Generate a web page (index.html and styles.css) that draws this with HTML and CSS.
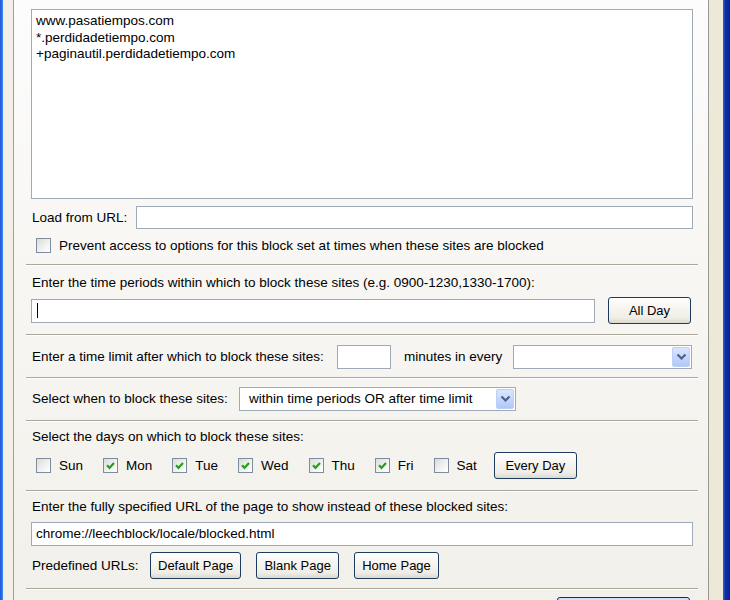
FILE: index.html
```html
<!DOCTYPE html>
<html lang="en">
<head>
<meta charset="utf-8">
<title>LeechBlock Options</title>
<link rel="stylesheet" href="styles.css">
</head>
<body>
<div class="window">
  <div class="frame-l"></div>
  <div class="gutter-l"></div>
  <div class="panel">
    <div class="sites">www.pasatiempos.com<br>*.perdidadetiempo.com<br>+paginautil.perdidadetiempo.com</div>

    <div class="row row-load">
      <span class="lbl lbl-load">Load from URL:</span>
      <div class="input input-load"></div>
    </div>

    <div class="row row-check">
      <span class="cb"></span>
      <span>Prevent access to options for this block set at times when these sites are blocked</span>
    </div>

    <hr class="sep sep-a">

    <div class="line line-a">Enter the time periods within which to block these sites (e.g. 0900-1230,1330-1700):</div>
    <div class="row row-btn row-periods">
      <div class="input input-periods"><span class="caret"></span></div>
      <button class="btn">All Day</button>
    </div>

    <hr class="sep sep-b">

    <div class="row row-limit">
      <span class="lbl lbl-limit">Enter a time limit after which to block these sites:</span>
      <div class="input input-mins"></div>
      <span class="lbl lbl-every">minutes in every</span>
      <div class="select select-every">
        <span class="val"></span>
        <span class="arrow"><svg width="11" height="8" viewBox="0 0 11 8"><path d="M1.5 1.5 L5.5 5.5 L9.5 1.5" fill="none" stroke="#4d6185" stroke-width="2.2"/></svg></span>
      </div>
    </div>

    <hr class="sep sep-c">

    <div class="row row-when">
      <span class="lbl lbl-when">Select when to block these sites:</span>
      <div class="select select-when">
        <span class="val">within time periods OR after time limit</span>
        <span class="arrow"><svg width="11" height="8" viewBox="0 0 11 8"><path d="M1.5 1.5 L5.5 5.5 L9.5 1.5" fill="none" stroke="#4d6185" stroke-width="2.2"/></svg></span>
      </div>
    </div>

    <hr class="sep sep-d">

    <div class="line line-b">Select the days on which to block these sites:</div>
    <div class="row row-btn row-days">
      <div class="day"><span class="cb"></span><span>Sun</span></div>
      <div class="day"><span class="cb on"><svg width="11" height="11" viewBox="0 0 11 11"><path d="M2 5.2 L4.5 7.8 L9 3" fill="none" stroke="#21a121" stroke-width="2.2"/></svg></span><span>Mon</span></div>
      <div class="day"><span class="cb on"><svg width="11" height="11" viewBox="0 0 11 11"><path d="M2 5.2 L4.5 7.8 L9 3" fill="none" stroke="#21a121" stroke-width="2.2"/></svg></span><span>Tue</span></div>
      <div class="day"><span class="cb on"><svg width="11" height="11" viewBox="0 0 11 11"><path d="M2 5.2 L4.5 7.8 L9 3" fill="none" stroke="#21a121" stroke-width="2.2"/></svg></span><span>Wed</span></div>
      <div class="day"><span class="cb on"><svg width="11" height="11" viewBox="0 0 11 11"><path d="M2 5.2 L4.5 7.8 L9 3" fill="none" stroke="#21a121" stroke-width="2.2"/></svg></span><span>Thu</span></div>
      <div class="day"><span class="cb on"><svg width="11" height="11" viewBox="0 0 11 11"><path d="M2 5.2 L4.5 7.8 L9 3" fill="none" stroke="#21a121" stroke-width="2.2"/></svg></span><span>Fri</span></div>
      <div class="day"><span class="cb"></span><span>Sat</span></div>
      <button class="btn btn-every">Every Day</button>
    </div>

    <hr class="sep sep-e">

    <div class="line line-c">Enter the fully specified URL of the page to show instead of these blocked sites:</div>
    <div class="input input-url">chrome://leechblock/locale/blocked.html</div>
    <div class="row row-btn row-predef">
      <span class="lbl lbl-predef">Predefined URLs:</span>
      <button class="btn">Default Page</button>
      <button class="btn">Blank Page</button>
      <button class="btn">Home Page</button>
    </div>

    <hr class="sep sep-f">

    <div class="row row-bottom">
      <div class="btn btn-focus"></div>
    </div>
  </div>
  <div class="gutter-r"></div>
  <div class="frame-r"></div>
</div>
</body>
</html>
```

FILE: styles.css
```css
* { box-sizing: border-box; margin: 0; padding: 0; }
html, body { width: 730px; height: 600px; overflow: hidden; }
body {
  font: 13.5px/16px "Liberation Sans", Arial, sans-serif;
  color: #000;
  background: #ece9d8;
}
.window { display: flex; height: 600px; overflow: hidden; }
.frame-l { width: 3px; flex: none; background: linear-gradient(90deg, #1a56d6, #3f86f2); }
.gutter-l { width: 10px; flex: none; background: #f1efe6; }
.gutter-r { width: 14px; flex: none; background: #ece9d8; }
.frame-r { width: 7px; flex: none; background: linear-gradient(90deg, #3463da 0, #0c2ea8 35%, #0a2290 100%); }

.panel {
  width: 696px;
  flex: none;
  border-left: 1px solid #9aa0a2;
  border-right: 1px solid #9a9a94;
  background: linear-gradient(#fcfcfd 0%, #f8f7f4 40%, #f1f0ea 100%);
  padding: 9px 15px 0 17px;
  display: flex;
  flex-direction: column;
  overflow: hidden;
}

.sites {
  height: 190px;
  flex: none;
  border: 1px solid #9eabb7;
  background: #fff;
  padding: 3px 4px;
  line-height: 16.5px;
}

.row { display: flex; align-items: center; flex: none; }
.lbl { flex: none; padding-left: 1px; white-space: nowrap; }
.line { height: 16px; padding-left: 1px; flex: none; white-space: nowrap; }

.input {
  height: 24px;
  border: 1px solid #9eabb7;
  background: #fff;
  display: flex;
  align-items: center;
  padding-left: 4px;
  flex: none;
}

.sep {
  flex: none;
  height: 2px;
  border: 0;
  border-top: 1px solid #aca899;
  border-bottom: 1px solid #fff;
  margin-left: -5px;
  margin-right: -5px;
}

/* load row */
.row-load { margin-top: 7px; height: 23px; }
.lbl-load { width: 105px; }
.input-load { flex: 1; height: 23px; }

/* check row */
.row-check { margin-top: 9px; height: 15px; gap: 8px; padding-left: 5px; }

.cb {
  width: 15px;
  height: 15px;
  flex: none;
  border: 1px solid #7d8d9f;
  background: linear-gradient(135deg, #dcdcd6 0%, #f3f3f0 60%, #fff 100%);
  display: flex;
  align-items: center;
  justify-content: center;
}

.sep-a { margin-top: 11px; }
.line-a { margin-top: 9px; }

.row-btn { height: 27px; }
.row-periods { margin-top: 6px; }
.input-periods { width: 564px; }
.caret { width: 1px; height: 15px; background: #000; margin-left: 1px; }
.row-periods .btn { margin-left: 13px; }

.btn {
  height: 27px;
  min-width: 83px;
  padding: 0 7px;
  border: 1px solid #1d3a5f;
  border-radius: 3px;
  background: linear-gradient(#ffffff 0%, #f7f6f2 35%, #eeede6 80%, #dcd8cc 100%);
  font: 13px/16px "Liberation Sans", Arial, sans-serif;
  color: #000;
  flex: none;
  display: flex;
  align-items: center;
  justify-content: center;
}

.sep-b { margin-top: 10px; }

.row-limit { margin-top: 9px; height: 24px; }
.lbl-limit { width: 306px; }
.input-mins { width: 54px; }
.lbl-every { margin-left: 12px; width: 110px; }

.select {
  height: 24px;
  border: 1px solid #9eabb7;
  background: #fff;
  display: flex;
  align-items: center;
  padding: 1px;
  flex: none;
}
.select .val { flex: 1; padding-left: 8px; white-space: nowrap; }
.select .arrow {
  width: 18px;
  height: 20px;
  flex: none;
  border: 1px solid #bccff8;
  border-radius: 2px;
  background: linear-gradient(#dbe6fe 0%, #c6d7fc 50%, #b2c7f6 100%);
  display: flex;
  align-items: center;
  justify-content: center;
}
.select-every { width: 179px; }

.sep-c { margin-top: 8px; }
.row-when { margin-top: 8px; height: 24px; }
.lbl-when { width: 208px; }
.select-when { width: 277px; }

.sep-d { margin-top: 9px; }
.line-b { margin-top: 7px; }

.row-days { margin-top: 7px; }
.day { display: flex; align-items: center; gap: 8px; margin: 0 15px 0 5px; flex: none; }
.btn-every { margin-left: 2px; }

.sep-e { margin-top: 11px; }
.line-c { margin-top: 7px; }
.input-url { margin-top: 7px; white-space: nowrap; }

.row-predef { margin-top: 6px; gap: 15px; }
.lbl-predef { width: 104px; }

.sep-f { margin-top: 9px; }

.row-bottom { margin-top: 7px; height: 27px; justify-content: flex-end; padding-right: 3px; }
.btn-focus {
  width: 133px;
  border-color: #0f2a6e;
  box-shadow: inset 0 1px 0 1px #cfe2fb, inset 0 0 0 2px #a9c6f3;
}
```
